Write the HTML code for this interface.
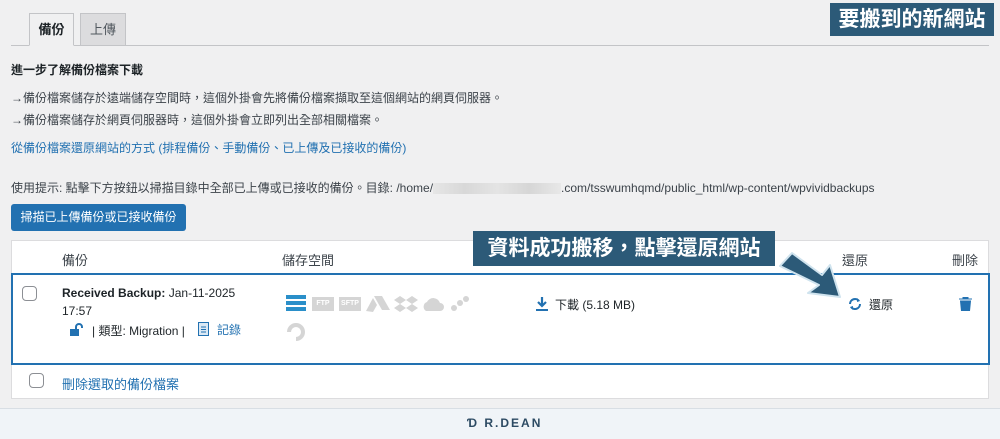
<!DOCTYPE html>
<html><head><meta charset="utf-8"><style>
*{box-sizing:border-box;margin:0;padding:0}
body{width:1000px;height:439px;overflow:hidden;background:#f0f0f1;font-family:"Liberation Sans","Noto Sans CJK TC",sans-serif;font-size:12px;color:#3c434a;position:relative}
.abs{position:absolute;white-space:nowrap}
.tab{position:absolute;top:13px;height:33px;border:1px solid #c3c4c7;font-size:13px;text-align:center;line-height:32px}
a{color:#2271b1;text-decoration:none}
.lab{position:absolute;background:#2c5a78;color:#fff;font-weight:bold;font-size:21px;line-height:33px;padding:0 7px;white-space:nowrap}
.cb{position:absolute;width:15px;height:15px;border:1px solid #8c8f94;border-radius:4px;background:#fff}
.ic{position:absolute;background:#d5d5d5;color:#fff;font-size:7px;font-weight:bold;text-align:center;line-height:14px}
</style></head><body>
<div class="abs" style="left:11px;top:45px;width:978px;height:1px;background:#c3c4c7"></div>
<div class="tab" style="left:29px;width:45px;background:#f0f0f1;border-bottom-color:#f0f0f1;color:#1d2327;font-weight:bold">備份</div>
<div class="tab" style="left:80px;width:46px;background:#dcdcde;color:#50575e">上傳</div>
<div class="lab" style="left:830px;top:3px;width:164px;text-align:center">要搬到的新網站</div>
<div class="abs" style="left:11px;top:61px;font-weight:bold;color:#1d2327">進一步了解備份檔案下載</div>
<div class="abs" style="left:11px;top:89px">→備份檔案儲存於遠端儲存空間時，這個外掛會先將備份檔案擷取至這個網站的網頁伺服器。</div>
<div class="abs" style="left:11px;top:111px">→備份檔案儲存於網頁伺服器時，這個外掛會立即列出全部相關檔案。</div>
<div class="abs" style="left:11px;top:139px"><a>從備份檔案還原網站的方式 (排程備份、手動備份、已上傳及已接收的備份)</a></div>
<div class="abs" style="left:11px;top:179px">使用提示: 點擊下方按鈕以掃描目錄中全部已上傳或已接收的備份。目錄: /home/<span style="display:inline-block;width:128px;height:11px;background:linear-gradient(90deg,#e6e6e6,#d8d8d8,#e4e4e4,#d6d6d6,#e8e8e8);vertical-align:middle"></span>.com/tsswumhqmd/public_html/wp-content/wpvividbackups</div>
<div class="abs" style="left:11px;top:204px;width:175px;height:27px;background:#2271b1;border-radius:3px;color:#fff;font-size:12px;line-height:27px;text-align:center">掃描已上傳備份或已接收備份</div>
<div class="abs" style="left:11px;top:240px;width:978px;height:159px;background:#fff;border:1px solid #dcdcde"></div>
<div class="abs" style="left:62px;top:250px;font-size:13px">備份</div>
<div class="abs" style="left:282px;top:250px;font-size:13px">儲存空間</div>
<div class="abs" style="left:842px;top:250px;font-size:13px">還原</div>
<div class="abs" style="left:952px;top:250px;font-size:13px">刪除</div>
<div class="abs" style="left:11px;top:273px;width:979px;height:92px;border:2px solid #2271b1;background:#fff"></div>
<div class="cb" style="left:22px;top:286px"></div>
<div class="abs" style="left:62px;top:286px;color:#1d2327"><b>Received Backup:</b> Jan-11-2025</div>
<div class="abs" style="left:62px;top:304px;color:#1d2327">17:57</div>
<svg class="abs" style="left:69px;top:323px" width="14" height="14" viewBox="0 0 14 14"><rect x="1" y="6" width="9" height="7" fill="#2271b1"/><path d="M7 6V4a3 3 0 0 1 6 0v1" stroke="#2271b1" stroke-width="2" fill="none"/></svg>
<div class="abs" style="left:92px;top:322px;color:#1d2327">| 類型: Migration |</div>
<svg class="abs" style="left:198px;top:322px" width="11" height="14" viewBox="0 0 11 14"><rect x=".5" y=".5" width="10" height="13" fill="#dbe9f5" stroke="#2271b1"/><path d="M3 5h5M3 7.5h5M3 10h5" stroke="#2271b1"/></svg>
<div class="abs" style="left:217px;top:321px"><a>記錄</a></div>
<div class="abs" style="left:286px;top:295px;width:20px;height:16px;background:repeating-linear-gradient(#2a8fc9 0 4px,#fff 4px 6px)"></div>
<div class="ic" style="left:312px;top:297px;width:22px">FTP</div>
<div class="ic" style="left:339px;top:297px;width:22px">SFTP</div>
<svg class="abs" style="left:366px;top:296px" width="24" height="16"><path d="M8 0h8l8 14H16zM7 2l4 7-4 7-7-1z" fill="#d5d5d5"/></svg>
<svg class="abs" style="left:394px;top:295px" width="24" height="20"><path d="M6 1l6 4-6 4-6-4zM18 1l6 4-6 4-6-4zM6 9l6 4-6 4-6-4zM18 9l6 4-6 4-6-4z" fill="#d5d5d5"/></svg>
<svg class="abs" style="left:421px;top:296px" width="24" height="16"><path d="M5 15a5 5 0 0 1 1-9 7 7 0 0 1 13 1 4 4 0 0 1 0 8z" fill="#d5d5d5"/></svg>
<svg class="abs" style="left:448px;top:295px" width="24" height="20"><circle cx="18" cy="4" r="3" fill="#d5d5d5"/><circle cx="12" cy="8" r="3" fill="#d5d5d5"/><circle cx="6" cy="13" r="3" fill="#d5d5d5"/></svg>
<svg class="abs" style="left:286px;top:322px" width="20" height="20"><path d="M10 17a7 7 0 1 0-7-7" stroke="#d5d5d5" stroke-width="4" fill="none"/></svg>
<svg class="abs" style="left:535px;top:297px" width="14" height="14"><path d="M7 0v8M3 5l4 4 4-4" stroke="#2271b1" stroke-width="2.2" fill="none"/><path d="M1 13h12" stroke="#2271b1" stroke-width="2"/></svg>
<div class="abs" style="left:555px;top:296px;color:#1d2327">下載 (5.18 MB)</div>
<svg class="abs" style="left:848px;top:297px" width="14" height="14" viewBox="0 0 14 14"><path d="M2 7a5 5 0 0 1 9-3M12 7a5 5 0 0 1-9 3" stroke="#2271b1" stroke-width="2" fill="none"/><path d="M9 1l3 3-3 1zM5 13l-3-3 3-1z" fill="#2271b1"/></svg>
<div class="abs" style="left:869px;top:296px;color:#1d2327">還原</div>
<svg class="abs" style="left:959px;top:297px" width="13" height="14"><path d="M0 2h13M4 2V0h5v2M1.5 4h10l-1 10h-8z" fill="#2271b1" stroke="#2271b1"/></svg>
<svg class="abs" style="left:776px;top:250px" width="72" height="52"><path d="M4 16l12-13 30 22 8-10 10 32-32-4 11-8z" fill="#2c5a78" stroke="#cfe3ee" stroke-width="2" stroke-linejoin="round"/></svg>
<div class="lab" style="left:473px;top:231px;width:302px;height:35px;line-height:35px;font-size:21px;text-align:center">資料成功搬移，點擊還原網站</div>
<div class="cb" style="left:29px;top:373px"></div>
<div class="abs" style="left:62px;top:374px;font-size:13px"><a>刪除選取的備份檔案</a></div>
<div class="abs" style="left:0;top:408px;width:1000px;height:31px;background:#f0f4f8;border-top:1px solid #d8dee4"></div>
<div class="abs" style="left:467px;top:416px;font-size:12px;font-weight:bold;color:#2c4a63;letter-spacing:2px">Ɗ R.DEAN</div>
</body></html>
